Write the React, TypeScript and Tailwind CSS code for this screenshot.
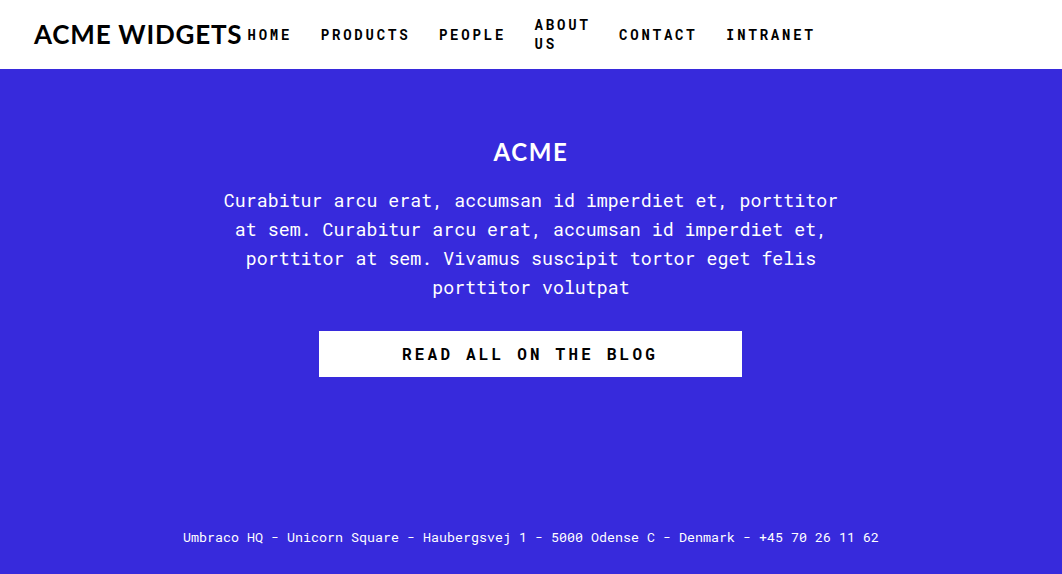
const navItems = ["Home", "Products", "People", "About us", "Contact", "Intranet"];

const mono = "font-['Roboto_Mono','DejaVu_Sans_Mono',monospace]";

export default function App() {
  return (
    <div className="min-h-screen flex flex-col bg-[#372adc]">
      <header className="h-[69px] bg-white flex items-center px-[34px] gap-[5px]">
        <a href="#" className="-mt-[2px] font-['Lato',sans-serif] font-bold text-[26px] tracking-[0.8px] text-black uppercase leading-none">
          Acme Widgets
        </a>
        <nav className="-mt-px">
          <ul className={`flex items-center gap-[28.5px] ${mono} font-bold text-[14px] leading-[19px] tracking-[0.2em] uppercase text-black`}>
            {navItems.map(item => (
              <li key={item} className={item === "About us" ? "w-min" : ""}>
                <a href="#">{item}</a>
              </li>
            ))}
          </ul>
        </nav>
      </header>

      <main className="flex-1 flex flex-col items-center pt-[68px] text-white">
        <h1 className="font-['Lato',sans-serif] font-bold text-[24px] leading-[29px] tracking-[1.6px] uppercase">
          Acme
        </h1>
        <p className={`mt-[20px] max-w-[630px] text-center ${mono} text-[18.3px] leading-[29px]`}>
          Curabitur arcu erat, accumsan id imperdiet et, porttitor at sem. Curabitur arcu erat, accumsan id imperdiet et, porttitor at sem. Vivamus suscipit tortor eget felis porttitor volutpat
        </p>
        <a
          href="#"
          className={`mt-[29px] w-[423px] h-[46px] -ml-[2px] bg-white flex items-center justify-center ${mono} font-bold text-[16px] tracking-[0.2em] uppercase text-black`}
        >
          Read all on the blog
        </a>
      </main>

      <footer className={`pb-[27px] text-center text-white ${mono} text-[13.33px] leading-[20px]`}>
        Umbraco HQ - Unicorn Square - Haubergsvej 1 - 5000 Odense C - Denmark - +45 70 26 11 62
      </footer>
    </div>
  );
}
